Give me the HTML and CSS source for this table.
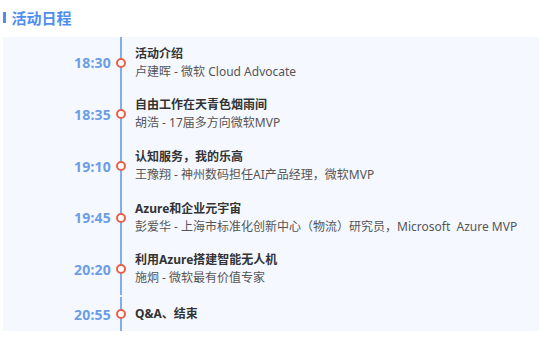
FILE: index.html
```html
<!DOCTYPE html>
<html lang="zh-CN">
<head>
<meta charset="utf-8">
<title>活动日程</title>
<link rel="stylesheet" href="styles.css">
</head>
<body>
<h2 class="heading"><span class="heading-bar"></span>活动日程</h2>
<div class="panel">
  <div class="row">
    <div class="time">18:30</div>
    <div class="rail"><span class="dot"></span></div>
    <div class="content">
      <div class="title">活动介绍</div>
      <div class="sub">卢建晖 - 微软 Cloud Advocate</div>
    </div>
  </div>
  <div class="row">
    <div class="time">18:35</div>
    <div class="rail"><span class="dot"></span></div>
    <div class="content">
      <div class="title">自由工作在天青色烟雨间</div>
      <div class="sub">胡浩 - 17届多方向微软MVP</div>
    </div>
  </div>
  <div class="row">
    <div class="time">19:10</div>
    <div class="rail"><span class="dot"></span></div>
    <div class="content">
      <div class="title">认知服务，我的乐高</div>
      <div class="sub">王豫翔 - 神州数码担任AI产品经理，微软MVP</div>
    </div>
  </div>
  <div class="row">
    <div class="time">19:45</div>
    <div class="rail"><span class="dot"></span></div>
    <div class="content">
      <div class="title">Azure和企业元宇宙</div>
      <div class="sub">彭爱华 - 上海市标准化创新中心（物流）研究员，Microsoft&nbsp; Azure MVP</div>
    </div>
  </div>
  <div class="row">
    <div class="time">20:20</div>
    <div class="rail"><span class="dot"></span></div>
    <div class="content">
      <div class="title">利用Azure搭建智能无人机</div>
      <div class="sub">施炯 - 微软最有价值专家</div>
    </div>
  </div>
  <div class="row row-last">
    <div class="time">20:55</div>
    <div class="rail"><span class="dot"></span></div>
    <div class="content">
      <div class="title">Q&amp;A、结束</div>
    </div>
  </div>
</div>
</body>
</html>
```
FILE: styles.css
```css
html, body {
  margin: 0;
  padding: 0;
  background: #ffffff;
}
body {
  font-family: "Noto Sans", "Noto Sans CJK SC", sans-serif;
  width: 554px;
  height: 343px;
  overflow: hidden;
}
.heading {
  display: flex;
  align-items: center;
  gap: 6px;
  margin: 0;
  padding: 4px 0 0 3px;
  height: 26px;
  font-size: 15px;
  font-weight: bold;
  color: #4f8ef0;
  font-family: "Noto Sans CJK SC", sans-serif;
}
.heading-bar {
  display: inline-block;
  width: 2.5px;
  height: 11px;
  background: #4f8ef0;
}
.panel {
  margin: 7px 0 0 3px;
  width: 536px;
  height: 294px;
  background: #f5f9ff;
  display: flex;
  flex-direction: column;
}
.row {
  display: flex;
  align-items: stretch;
  height: 52px;
}
.row-last {
  margin-top: 2px;
  height: 34px;
}
.time {
  width: 108px;
  display: flex;
  align-items: center;
  justify-content: flex-end;
  font-size: 14px;
  font-weight: bold;
  color: #6c9de6;
  font-family: "Noto Sans", sans-serif;
  letter-spacing: 0.2px;
}
.rail {
  position: relative;
  width: 20px;
  display: flex;
  align-items: center;
  justify-content: center;
}
.rail::before {
  content: "";
  position: absolute;
  left: 9px;
  top: 0;
  bottom: 0;
  width: 2px;
  background: #83ade9;
}
.dot {
  position: relative;
  width: 6px;
  height: 6px;
  border: 2px solid #e8604c;
  border-radius: 50%;
  background: #ffffff;
}
.content {
  margin-left: 4px;
  display: flex;
  flex-direction: column;
  justify-content: center;
  font-size: 12px;
  line-height: 18px;
}
.title {
  font-weight: bold;
  color: #333333;
}
.sub {
  color: #555555;
}
```
